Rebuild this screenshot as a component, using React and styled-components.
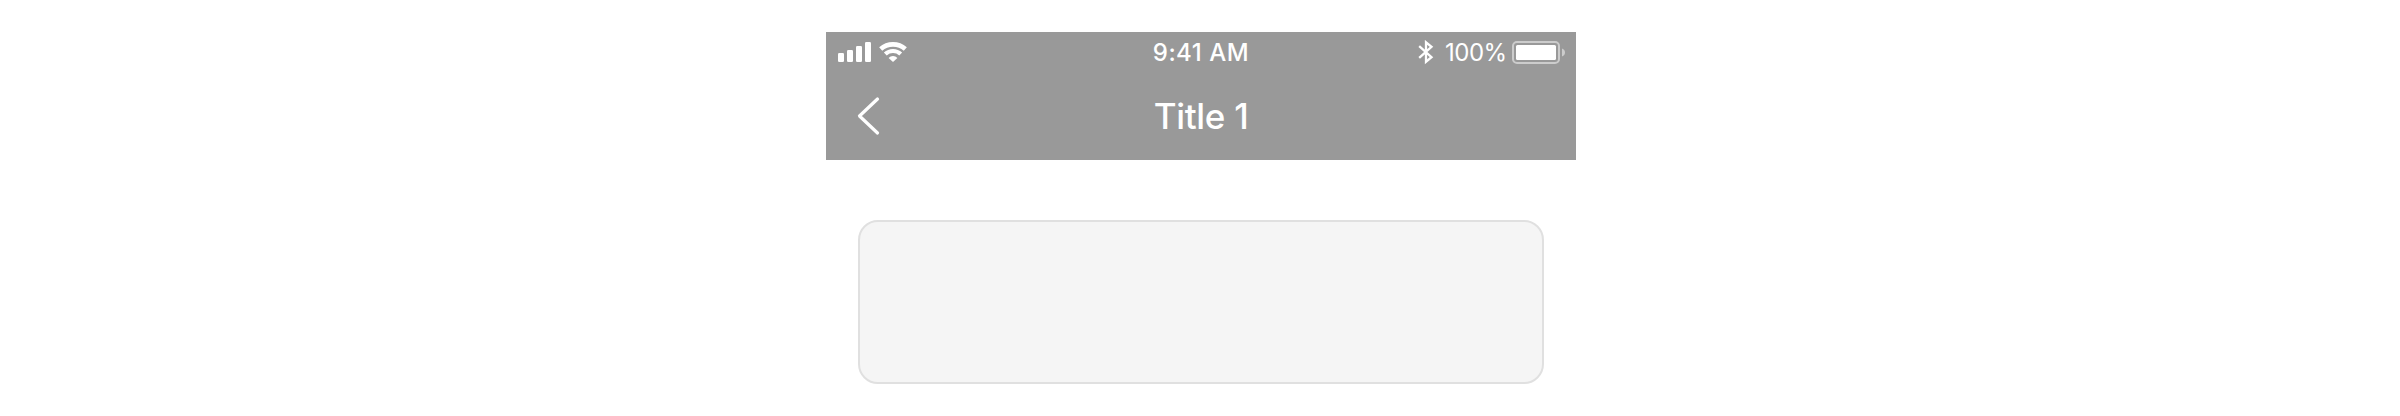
import React from "react";
import styled, { createGlobalStyle } from "styled-components";

const GlobalStyle = createGlobalStyle`
  body {
    margin: 0;
    background: #fff;
    font-family: Inter, "Liberation Sans", sans-serif;
  }
`;

const Page = styled.main`
  box-sizing: border-box;
  height: 416px;
  padding: 32px 824px 0 826px;
`;

const Header = styled.header`
  height: 128px;
  background: #999;
  color: #fff;
`;

const StatusBar = styled.div`
  display: grid;
  grid-template-columns: 1fr auto 1fr;
  align-items: center;
  height: 40px;
`;

const Reception = styled.div`
  display: flex;
  align-items: center;
  gap: 8px;
  padding-left: 12px;
`;

const Clock = styled.time`
  padding-top: 2px;
  font-size: 24px;
  font-weight: 550;
  line-height: 38px;
  letter-spacing: 0.45px;
  word-spacing: 0.4px;
`;

const Power = styled.div`
  display: flex;
  align-items: center;
  justify-content: flex-end;
  padding: 1px 11px 0 0;
`;

const Percent = styled.span`
  width: 60px;
  margin: 0 7px 0 11px;
  padding-top: 1px;
  font-size: 24px;
  font-weight: 370;
  line-height: 38px;
  letter-spacing: -0.5px;
  text-align: right;
`;

const NavBar = styled.nav`
  display: grid;
  grid-template-columns: 1fr auto 1fr;
  align-items: center;
  height: 88px;
`;

const BackButton = styled.button`
  display: flex;
  justify-self: start;
  margin: 0;
  padding: 0 0 0 30px;
  border: 0;
  background: none;
  color: inherit;
`;

const Title = styled.h1`
  margin: 0;
  font-size: 35px;
  font-weight: 500;
  line-height: 84px;
  letter-spacing: -0.3px;
`;

const Card = styled.section`
  box-sizing: border-box;
  height: 164px;
  margin: 60px 32px 0;
  border: 2px solid #e0e0e0;
  border-radius: 20px;
  background: #f5f5f5;
`;

const Icon = styled.svg`
  display: block;
  flex: none;
`;

const SignalIcon = () => (
  <Icon width="33" height="20" viewBox="0 0 33 20" fill="#fff">
    <rect y="11" width="6" height="9" rx="1.3" />
    <rect x="9" y="8" width="6" height="12" rx="1.3" />
    <rect x="18" y="4" width="6" height="16" rx="1.3" />
    <rect x="27" width="6" height="20" rx="1.3" />
  </Icon>
);

const WifiIcon = () => (
  <Icon width="28" height="20" viewBox="0 0 28 20" fill="none" stroke="#fff" strokeWidth="4.6">
    <path d="M1.7 7C8.6.8 19.4.8 26.3 7" />
    <path d="M6.3 12c4.4-4 11-4 15.4 0" strokeWidth="4.2" />
    <path d="M9.6 16c2.4-2.7 6.4-2.7 8.8 0L14 20Z" fill="#fff" stroke="none" />
  </Icon>
);

const BluetoothIcon = () => (
  <Icon width="16" height="25" viewBox="0 0 16 25" fill="none" stroke="#fff" strokeWidth="2.3">
    <path d="M1.2 6.2 13.5 17.2 8 21.7V2.3l5.5 4.5L1.2 17.8" />
  </Icon>
);

const BatteryIcon = () => (
  <Icon width="53" height="23" viewBox="0 0 53 23">
    <rect x="1" y="1" width="46" height="21" rx="4" fill="none" stroke="#fff" strokeOpacity=".5" strokeWidth="2" />
    <rect x="4" y="4" width="40" height="15" rx="1.5" fill="#fff" />
    <path d="M50 7.5c4 1.3 4 6.7 0 8Z" fill="#fff" fillOpacity=".5" />
  </Icon>
);

const BackIcon = () => (
  <Icon width="26" height="40" viewBox="0 0 26 40" fill="none" stroke="#fff" strokeWidth="3.2" strokeLinecap="round" strokeLinejoin="round">
    <path d="M21.5 3 3.5 20l18 17" />
  </Icon>
);

export default function App() {
  return (
    <>
      <GlobalStyle />
      <Page>
        <Header>
          <StatusBar>
            <Reception>
              <SignalIcon />
              <WifiIcon />
            </Reception>
            <Clock>9:41 AM</Clock>
            <Power>
              <BluetoothIcon />
              <Percent>100%</Percent>
              <BatteryIcon />
            </Power>
          </StatusBar>
          <NavBar>
            <BackButton aria-label="Back">
              <BackIcon />
            </BackButton>
            <Title>Title 1</Title>
          </NavBar>
        </Header>
        <Card />
      </Page>
    </>
  );
}
